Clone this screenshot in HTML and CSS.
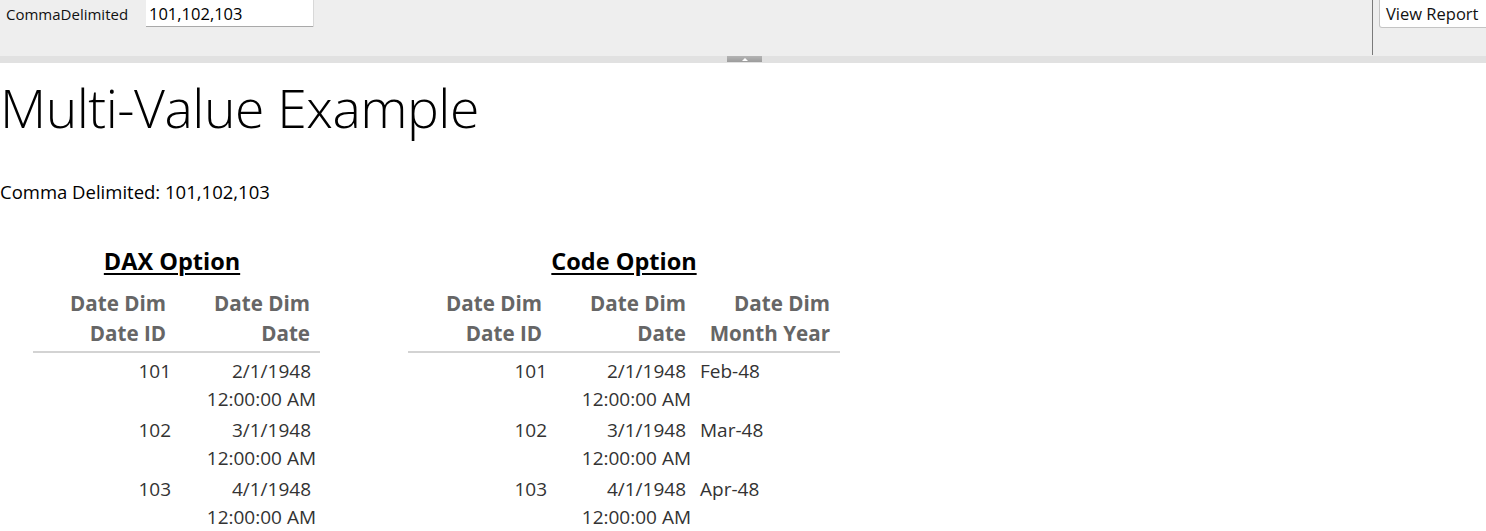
FILE: index.html
```html
<!DOCTYPE html>
<html>
<head>
<meta charset="utf-8">
<link rel="stylesheet" href="styles.css">
</head>
<body>
<div class="toolbar">
  <div class="params">
    <span class="param-label">CommaDelimited</span>
    <div class="param-input">101,102,103</div>
  </div>
  <div class="actions">
    <div class="divider"></div>
    <div class="view-btn">View Report</div>
  </div>
</div>
<div class="splitter"><div class="handle"><span class="tri"></span></div></div>
<div class="report">
  <h1 class="title">Multi-Value Example</h1>
  <p class="summary">Comma Delimited: 101,102,103</p>
  <div class="tables">
    <div class="block dax">
      <div class="block-title"><span>DAX Option</span></div>
      <table class="grid">
        <colgroup><col class="c1"><col class="c2"></colgroup>
        <thead>
          <tr><th>Date Dim<br>Date ID</th><th>Date Dim<br>Date</th></tr>
        </thead>
        <tbody>
          <tr><td>101</td><td><span class="d1">2/1/1948</span><br>12:00:00 AM</td></tr>
          <tr><td>102</td><td><span class="d1">3/1/1948</span><br>12:00:00 AM</td></tr>
          <tr><td>103</td><td><span class="d1">4/1/1948</span><br>12:00:00 AM</td></tr>
        </tbody>
      </table>
    </div>
    <div class="block code">
      <div class="block-title"><span>Code Option</span></div>
      <table class="grid">
        <colgroup><col class="k1"><col class="k2"><col class="k3"></colgroup>
        <thead>
          <tr><th>Date Dim<br>Date ID</th><th>Date Dim<br>Date</th><th>Date Dim<br>Month Year</th></tr>
        </thead>
        <tbody>
          <tr><td>101</td><td><span class="d1">2/1/1948</span><br>12:00:00 AM</td><td class="left">Feb-48</td></tr>
          <tr><td>102</td><td><span class="d1">3/1/1948</span><br>12:00:00 AM</td><td class="left">Mar-48</td></tr>
          <tr><td>103</td><td><span class="d1">4/1/1948</span><br>12:00:00 AM</td><td class="left">Apr-48</td></tr>
        </tbody>
      </table>
    </div>
  </div>
</div>
</body>
</html>
```
FILE: styles.css
```css
html, body {
  margin: 0;
  padding: 0;
  background: #ffffff;
  font-family: "Open Sans", "Noto Sans", sans-serif;
  overflow: hidden;
}

.toolbar {
  height: 56px;
  background: #eeeeee;
  display: flex;
  justify-content: space-between;
  align-items: flex-start;
  overflow: hidden;
}

.params {
  display: flex;
  align-items: flex-start;
}

.param-label {
  font-size: 15px;
  color: #111;
  padding-left: 6px;
  line-height: 28px;
  width: 140px;
}

.param-input {
  width: 164px;
  height: 26px;
  background: #fff;
  border-bottom: 1px solid #a9a9a9;
  box-shadow: 1px 0 0 #d8d8d8;
  font-size: 16.5px;
  line-height: 28px;
  padding-left: 3px;
  color: #000;
}

.actions {
  display: flex;
  align-items: flex-start;
  height: 56px;
  width: 114px;
  flex-shrink: 0;
}

.divider {
  width: 1px;
  height: 55px;
  background: #7a7a7a;
  margin-right: 6px;
  flex-shrink: 0;
}

.view-btn {
  width: 112px;
  flex-shrink: 0;
  height: 27px;
  background: #fff;
  border: 1px solid #c4c4c4;
  border-top: none;
  border-radius: 0 0 3px 3px;
  font-size: 16.5px;
  line-height: 28px;
  padding-left: 6px;
  color: #111;
  box-sizing: content-box;
}

.splitter {
  height: 7px;
  background: #e1e1e1;
  display: flex;
  justify-content: center;
}

.handle {
  width: 35px;
  height: 6px;
  margin-left: 3px;
  background: linear-gradient(#b4b4b4, #9c9c9c);
  display: flex;
  justify-content: center;
  align-items: center;
}

.tri {
  width: 0;
  height: 0;
  border-left: 3px solid transparent;
  border-right: 3px solid transparent;
  border-bottom: 3px solid #ffffff;
}

.title {
  margin: 0;
  padding-top: 10px;
  font-weight: 300;
  font-size: 53.5px;
  line-height: 70px;
  color: #000;
  letter-spacing: -0.5px;
}

.summary {
  margin: 0;
  padding-top: 37px;
  font-size: 18.5px;
  line-height: 24px;
  color: #000;
}

.tables {
  display: flex;
  align-items: flex-start;
  margin-top: 42px;
}

.block {
  display: flex;
  flex-direction: column;
}

.dax { margin-left: 33px; }
.code { margin-left: 88px; }

.block-title {
  text-align: center;
  font-weight: 700;
  font-size: 23.5px;
  line-height: 30px;
  color: #000;
  margin-bottom: 12px;
}

.dax .block-title { padding-right: 9px; }

.block-title span {
  text-decoration: underline;
  text-underline-offset: 3px;
  text-decoration-thickness: 2px;
}

.grid {
  border-collapse: collapse;
  table-layout: fixed;
}

.c1 { width: 142px; }
.c2 { width: 145px; }
.k1 { width: 143px; }
.k2 { width: 144px; }
.k3 { width: 145px; }

.grid th {
  font-weight: 700;
  font-size: 20.6px;
  line-height: 30px;
  color: #666666;
  text-align: right;
  padding: 0 9px 3px 0;
  border-bottom: 2px solid #d3d3d3;
  vertical-align: bottom;
}

.grid th:last-child { padding-right: 10px; }

.grid td {
  font-size: 19px;
  line-height: 27.5px;
  color: #333333;
  text-align: right;
  padding: 4px 4px 0 0;
  vertical-align: top;
}

.grid tbody tr:first-child td { padding-top: 5px; }

.grid td .d1 {
  margin-right: 5px;
}

.grid td.left {
  text-align: left;
  padding-left: 5px;
}
```
